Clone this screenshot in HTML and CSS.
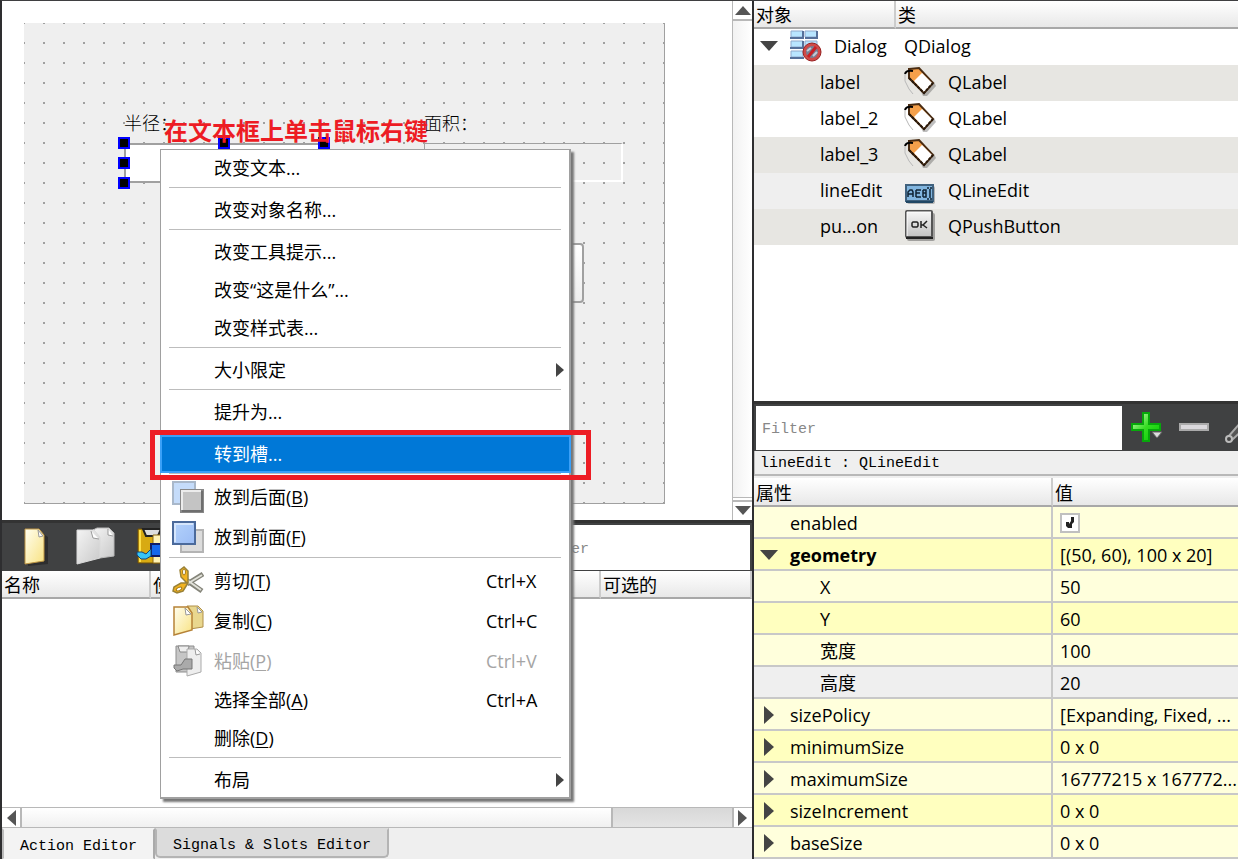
FILE: index.html
```html
<!DOCTYPE html>
<html lang="zh-CN">
<head>
<meta charset="utf-8">
<title>Qt Designer</title>
<link rel="stylesheet" href="styles.css">
</head>
<body>
<svg class="defs" aria-hidden="true">
  <defs>
    <linearGradient id="paper" x1="0" y1="0" x2="1" y2="1"><stop offset="0" stop-color="#fffef0"/><stop offset="1" stop-color="#f8e282"/></linearGradient>
    <linearGradient id="greypaper" x1="0" y1="0" x2="1" y2="1"><stop offset="0" stop-color="#f4f4f4"/><stop offset="1" stop-color="#c9c9c9"/></linearGradient>
    <linearGradient id="blue" x1="0" y1="0" x2="1" y2="1"><stop offset="0" stop-color="#b4d2fb"/><stop offset="1" stop-color="#9bbcf5"/></linearGradient>
    <linearGradient id="green" x1="0" y1="0" x2="1" y2="1"><stop offset="0" stop-color="#d6ffc4"/><stop offset=".5" stop-color="#35dc22"/><stop offset="1" stop-color="#00c900"/></linearGradient>
    <linearGradient id="silver" x1="0" y1="0" x2="0" y2="1"><stop offset="0" stop-color="#f7f7f7"/><stop offset="1" stop-color="#c2c2c2"/></linearGradient>
    <symbol id="tag" viewBox="0 0 32 32">
      <path d="M9 8 19 30 23 30 32 20 30 16z" fill="#000" opacity=".25"/>
      <path d="M5 3 15 2 29 17 20 27 5 12z" fill="#f5a04a" stroke="#4a2c12" stroke-width="2"/>
      <path d="m10 15 8-8 10 10-8 9z" fill="#fff"/>
      <path d="m5 12 15 15 9-10" fill="none" stroke="#27180b" stroke-width="2" stroke-dasharray="3 1"/>
      <path d="M9 5Q2 4 1 8" fill="none" stroke="#000" stroke-width="2"/><path d="M1 8v7l4 8 4 5" fill="none" stroke="#b8b8b8"/>
    </symbol>
  </defs>
</svg>
<div class="app">
  <main class="left">
    <section class="workspace">
      <div class="canvas">
        <div class="form">
          <label class="form-label radius" for="radius">半径：</label>
          <span class="form-label area">面积：</span>
          <input class="form-edit" id="radius" type="text">
          <output class="form-output" aria-label="面积"></output>
          <button class="form-button" type="button" aria-label="计算"></button>
          <i class="handle" style="left:94px;top:114px"></i>
          <i class="handle" style="left:194px;top:114px"></i>
          <i class="handle" style="left:294px;top:114px"></i>
          <i class="handle" style="left:94px;top:134px"></i>
          <i class="handle" style="left:94px;top:154px"></i>
          <strong class="note">在文本框上单击鼠标右键</strong>
        </div>
      </div>
      <div class="vscroll">
        <button type="button" aria-label="向上"><svg width="16" height="10"><path d="m0 10 8-9 8 9z"/></svg></button>
        <span class="vtrack"></span>
        <button class="down" type="button" aria-label="向下"><svg width="16" height="10"><path d="m0 0 8 9 8-9z"/></svg></button>
      </div>
    </section>
    <section class="actions">
      <div class="toolbar">
        <button type="button" aria-label="新建"><svg width="26" height="40"><path d="M4 5h13l6 4v27L3 38z" fill="#191a1a" opacity=".5" transform="translate(2 1)"/><path d="M2 2h14l5 6v26L2 37z" fill="url(#paper)" stroke="#bd9443"/><path d="m15 3 1 7 4-1z" fill="#fff" stroke="#999"/></svg></button>
        <button class="copy" type="button" aria-label="复制"><svg width="40" height="40"><path d="M17 3 21 1h12l5 5v23l-14 2z" fill="url(#greypaper)" stroke="#b9b9b9"/><path d="M1 3h17l6 7v21L1 37z" fill="url(#greypaper)" stroke="#dadada"/><path d="m15 4 2 7 6 1m9-10 0 6 5 1" fill="#fff" stroke="#999"/></svg></button>
        <button class="paste" type="button" aria-label="粘贴"><svg width="36" height="40"><path d="M2 2h24v34H2z" fill="#d8aa12" stroke="#6d4e08"/><path d="M4 3v32" stroke="#ffe04a" stroke-width="2"/><path d="M7 2h18l-3 7H10z" fill="#ddd" stroke="#222" stroke-width="2"/><path d="M17 8h16v28H17z" fill="#fff3b6" stroke="#8c6814"/><path d="M15 17h14v12H15z" fill="#1668ee" stroke="#111c66" stroke-width="2"/><path d="M1 25h5l4 2 5-5v7l-5 3H5l-4-4z" fill="#37c5f6" stroke="#12457c"/></svg></button>
        <input class="action-filter" type="text" aria-label="Filter actions" placeholder="Filter">
      </div>
      <table class="action-table">
        <thead><tr><th class="c-name">名称</th><th>使用的</th><th class="c-check">可选的</th></tr></thead>
      </table>
      <div class="action-body"></div>
      <div class="hscroll">
        <button type="button" aria-label="向左"><svg width="10" height="16"><path d="M10 0 1 8l9 8z"/></svg></button>
        <span class="thumb"></span><span class="trough"></span>
        <button type="button" aria-label="向右"><svg width="10" height="16"><path d="m0 0 9 8-9 8z"/></svg></button>
      </div>
      <nav class="tabs">
        <button class="tab active" type="button">Action Editor</button>
        <button class="tab" type="button">Signals &amp; Slots Editor</button>
      </nav>
    </section>
  </main>
  <aside class="right">
    <section class="inspector">
      <table class="objects">
        <thead><tr><th class="o-name">对象</th><th>类</th></tr></thead>
        <tbody>
          <tr class="root"><td><span class="cell"><svg class="open" width="18" height="10"><path d="M0 0h18L9 10z"/></svg><svg width="32" height="32"><g fill="#b8e5ff" stroke="#8fa9cc"><path d="M1 1h12v6H1zm14 0h12v6H15zM1 11h12v6H1zm14 0h12v6H15zM1 21h12v6H1z"/></g><path d="M0 8h14m1 0h13M0 18h14m1 0h13M0 28h14M13 1v7m14-7v7M13 11v6" stroke="#56709a" stroke-width="2"/><circle cx="22" cy="22" r="9" fill="#cf4a48" stroke="#982020"/><circle cx="22" cy="22" r="6" fill="#777f94"/><path d="m17 21 4-3m2 8 4-4" stroke="#c4cad5" stroke-width="2"/><path d="M18 27 26 17" stroke="#c91f24" stroke-width="3"/></svg>Dialog</span></td><td><span class="cell">QDialog</span></td></tr>
          <tr class="alt"><td class="child">label</td><td><span class="cell"><svg width="32" height="32"><use href="#tag"/></svg>QLabel</span></td></tr>
          <tr><td class="child">label_2</td><td><span class="cell"><svg width="32" height="32"><use href="#tag"/></svg>QLabel</span></td></tr>
          <tr class="alt"><td class="child">label_3</td><td><span class="cell"><svg width="32" height="32"><use href="#tag"/></svg>QLabel</span></td></tr>
          <tr class="selected"><td class="child">lineEdit</td><td><span class="cell"><svg width="32" height="32"><rect x="3" y="12" width="28" height="18" rx="2" fill="#000" opacity=".25"/><rect x="2" y="11" width="27" height="16" fill="#81b5df" stroke="#40617e" stroke-width="2"/><path d="M2 28h27" stroke="#214765" stroke-width="2"/><path d="M4 23v-5l2-2h2l1 2v5M4 20h5M12 16v7m0-7h5m-5 3h4m-4 4h5m2-7v7m0-7h3v3h-3m3 0v4h-3M23 14h2m1 0h2m-2 1v9m-3 1h2m1 0h2" fill="none" stroke="#102436" stroke-width="1.5"/></svg>QLineEdit</span></td></tr>
          <tr class="alt"><td class="child">pu...on</td><td><span class="cell"><svg width="32" height="32"><rect x="3" y="3" width="28" height="28" rx="2" fill="#000" opacity=".3"/><rect x="2" y="1" width="26" height="26" rx="1" fill="url(#silver)" stroke="#555" stroke-width="2"/><path d="M3 26V2h24" fill="none" stroke="#fff"/><path d="M2 28h27" stroke="#222" stroke-width="2"/><path d="M9 12h4l1 1v3l-1 1H9l-1-1v-3zm8-1v7m0-3h2l4-4m-4 4 4 3" fill="none" stroke="#222" stroke-width="1.5"/></svg>QPushButton</span></td></tr>
        </tbody>
      </table>
    </section>
    <section class="properties">
      <div class="prop-tools">
        <input class="prop-filter" type="text" aria-label="Filter properties" placeholder="Filter">
        <button class="add" type="button" aria-label="添加"><svg width="32" height="32"><path d="M12 1h6v11h11v6H18v11h-6V18H1v-6h11z" fill="url(#green)" stroke="#07a80b" stroke-width="2"/><path d="M21 20h10l-5 6z" fill="#ddd" stroke="#666"/></svg></button>
        <button class="remove" type="button" aria-label="删除"><svg width="32" height="32"><path d="M2 12h28v6H2z" fill="#dad8dc" stroke="#aaa" stroke-width="2"/></svg></button>
        <button class="config" type="button" aria-label="配置"><svg width="32" height="32"><path d="m4 25 13-15 7-7 5 5-7 7L8 28z" fill="#555" stroke="#aaa" stroke-width="2"/><circle cx="5" cy="27" r="3" fill="#444" stroke="#bbb" stroke-width="2"/></svg></button>
      </div>
      <p class="current">lineEdit : QLineEdit</p>
      <table class="props">
        <thead><tr><th class="p-name">属性</th><th>值</th></tr></thead>
        <tbody>
          <tr><td class="leaf"><label for="enabled">enabled</label></td><td><span class="check"><input id="enabled" type="checkbox" checked><svg width="8" height="12" aria-hidden="true"><path d="M5 0h3v5L6 7v4H2L0 9V5h3v2l2-3z"/></svg></span></td></tr>
          <tr class="deep"><td><span class="prop"><svg class="open" width="18" height="10"><path d="M0 0h18L9 10z"/></svg><b>geometry</b></span></td><td>[(50, 60), 100 x 20]</td></tr>
          <tr><td class="sub">X</td><td>50</td></tr>
          <tr class="deep"><td class="sub">Y</td><td>60</td></tr>
          <tr><td class="sub">宽度</td><td>100</td></tr>
          <tr class="current-row"><td class="sub">高度</td><td>20</td></tr>
          <tr><td><span class="prop"><svg width="18" height="18"><path d="m4 0 10 9-10 9z"/></svg>sizePolicy</span></td><td>[Expanding, Fixed, ...</td></tr>
          <tr class="deep"><td><span class="prop"><svg width="18" height="18"><path d="m4 0 10 9-10 9z"/></svg>minimumSize</span></td><td>0 x 0</td></tr>
          <tr><td><span class="prop"><svg width="18" height="18"><path d="m4 0 10 9-10 9z"/></svg>maximumSize</span></td><td>16777215 x 167772...</td></tr>
          <tr class="deep"><td><span class="prop"><svg width="18" height="18"><path d="m4 0 10 9-10 9z"/></svg>sizeIncrement</span></td><td>0 x 0</td></tr>
          <tr><td><span class="prop"><svg width="18" height="18"><path d="m4 0 10 9-10 9z"/></svg>baseSize</span></td><td>0 x 0</td></tr>
        </tbody>
      </table>
    </section>
  </aside>
  <div class="menu" role="menu">
    <button type="button" role="menuitem"><span>改变文本...</span></button>
    <hr>
    <button type="button" role="menuitem"><span>改变对象名称...</span></button>
    <hr>
    <button type="button" role="menuitem"><span>改变工具提示...</span></button>
    <button type="button" role="menuitem"><span>改变“这是什么”...</span></button>
    <button type="button" role="menuitem"><span>改变样式表...</span></button>
    <hr>
    <button type="button" role="menuitem"><span>大小限定</span><svg class="more" width="8" height="14"><path d="m0 0 8 7-8 7z"/></svg></button>
    <hr>
    <button type="button" role="menuitem"><span>提升为...</span></button>
    <hr class="blank">
    <button class="hot" type="button" role="menuitem"><span>转到槽...</span></button>
    <hr>
    <button class="pic" type="button" role="menuitem"><svg class="icon" width="32" height="32"><path d="M1 1h22v22H1z" fill="#c5dcfa" stroke="#a9b8ca" stroke-width="2"/><path d="M9 9h22v22H9z" fill="#c4c4c4" stroke="#888" stroke-width="2"/><path d="M10 29V10h19" fill="none" stroke="#ececec" stroke-width="2"/><path d="M10 30h20V10" fill="none" stroke="#6e6e6e" stroke-width="2"/></svg><span>放到后面(<u>B</u>)</span></button>
    <button class="pic" type="button" role="menuitem"><svg class="icon" width="32" height="32"><path d="M9 9h22v22H9z" fill="#dcdcdc" stroke="#b4b4b4" stroke-width="2"/><path d="M1 1h22v22H1z" fill="url(#blue)" stroke="#4b6a9b" stroke-width="2"/><path d="M3 21V3h18" fill="none" stroke="#d6e6fc" stroke-width="2"/></svg><span>放到前面(<u>F</u>)</span></button>
    <hr>
    <button class="pic" type="button" role="menuitem"><svg class="icon" width="32" height="32"><path d="m14 15 16 11M15 19 31 9" stroke="#85857a" stroke-width="5"/><path d="m15 15 14 10M15 19 30 10" stroke="#e2e2da" stroke-width="2"/><path d="m16 15 0-9-4-4-4 3 1 7 6 6-6 0-7 4-1 4 4 2 6-2 5-8z" fill="#f2b321" stroke="#9a8238" stroke-width="1.5"/><ellipse cx="12" cy="7" rx="1.5" ry="3" fill="#fff" stroke="#a47b17"/><ellipse cx="7" cy="24" rx="3" ry="1.5" fill="#fff" stroke="#a47b17" transform="rotate(-25 7 24)"/></svg><span>剪切(<u>T</u>)</span><kbd>Ctrl+X</kbd></button>
    <button class="pic" type="button" role="menuitem"><svg class="icon" width="32" height="32"><path d="M15 1h11l5 5v16l-13 2z" fill="#e9d78e" stroke="#b08f48"/><path d="M2 2h14l4 6v17L2 30z" fill="url(#paper)" stroke="#b68237" stroke-width="1.5"/><path d="m13 3 1 7 5-1zM25 2l1 6 4-1z" fill="#fff" stroke="#999"/></svg><span>复制(<u>C</u>)</span><kbd>Ctrl+C</kbd></button>
    <button class="pic disabled" type="button" role="menuitem" disabled><svg class="icon" width="32" height="32"><path d="M4 1h18v26H4z" fill="#c6c6c6" stroke="#8d8d8d"/><path d="M6 1h11l-1 6H8z" fill="#eee" stroke="#888"/><path d="M15 4h10l4 4v19l-14 4z" fill="#eee" stroke="#aaa"/><path d="M2 20h7l4-6h7v10h-9L5 26l-3-3z" fill="#aaa" stroke="#777"/><path d="m23 4 1 6 4-1" fill="#fff" stroke="#999"/></svg><span>粘贴(<u>P</u>)</span><kbd>Ctrl+V</kbd></button>
    <button type="button" role="menuitem"><span>选择全部(<u>A</u>)</span><kbd>Ctrl+A</kbd></button>
    <button type="button" role="menuitem"><span>删除(<u>D</u>)</span></button>
    <hr>
    <button type="button" role="menuitem"><span>布局</span><svg class="more" width="8" height="14"><path d="m0 0 8 7-8 7z"/></svg></button>
  </div>
  <div class="callout"></div>
</div>
</body>
</html>
```
FILE: styles.css
```css
* { box-sizing: border-box; }
body { margin: 0; background: #fff; color: #000; font: 18px/24px "Open Sans", "Noto Sans CJK SC", sans-serif; }
button, input { font: inherit; color: inherit; border: 0; padding: 0; background: none; border-radius: 0; }
svg { display: block; flex: none; }
.defs { position: absolute; width: 0; height: 0; }
.app { position: relative; display: flex; height: 100vh; overflow: hidden; border-top: 1px solid #3f3f41; border-left: 2px solid #2e2e30; }
.left { flex: 750; min-width: 0; display: flex; flex-direction: column; border-right: 2px solid #2e2e30; }
.right { flex: 484; min-width: 0; display: flex; flex-direction: column; }

.workspace { flex: 519; min-height: 0; display: flex; overflow: hidden; }
.canvas { flex: 1; padding: 22px; }
.form { position: relative; width: 641px; height: 481px; background: conic-gradient(from 270deg at 2px 2px, #a0a0a0 90deg, transparent 0) -1px -1px / 20px 20px, #efefef; border-right: 1px solid #a0a0a0; border-bottom: 1px solid #a0a0a0; }
.form-label { position: absolute; top: 87px; font-family: "Noto Sans CJK SC", sans-serif; font-weight: 300; }
.radius { left: 100px; }
.area { left: 400px; }
.form-edit { position: absolute; left: 100px; top: 120px; width: 200px; height: 40px; background: #fff; border: 2px solid #a0a0a0; }
.form-output { position: absolute; left: 400px; top: 120px; width: 199px; height: 39px; border: solid #a0a0a0; border-width: 1px 2px 2px 1px; border-right-color: #fff; border-bottom-color: #fff; }
.form-button { position: absolute; left: 400px; top: 220px; width: 160px; height: 60px; background: linear-gradient(#fff, #eee); border: 2px solid #a0a0a0; border-radius: 4px; }
.handle { position: absolute; width: 12px; height: 12px; background: #000; border: 2px solid #00f; }
.note { position: absolute; left: 140px; top: 91px; font: bold 24px/32px "Noto Sans CJK SC", sans-serif; color: #ed1c24; white-space: nowrap; }

.vscroll { width: 20px; display: flex; flex-direction: column; border-left: 1px solid #b8b8b8; }
.vscroll button { height: 20px; padding-left: 2px; border-bottom: 2px solid #b8b8b8; }
.vscroll .down { border-bottom: 0; border-top: 2px solid #b8b8b8; }
.vtrack { flex: 1; background: linear-gradient(90deg, #f2f2f2, #fff); border-bottom: 1px solid #b8b8b8; margin-bottom: 2px; }
.vscroll svg, .hscroll svg { fill: #555; }

.actions { flex: 339; min-height: 0; display: flex; flex-direction: column; }
.toolbar { height: 51px; display: flex; align-items: center; background: #404142; border-top: 3px solid #333; padding: 2px 2px 2px 21px; }
.toolbar .copy { margin-left: 27px; }
.toolbar .paste { margin-left: 20px; }
.action-filter { flex: 1; min-width: 0; height: 45px; background: #fff; margin-left: 357px; padding: 4px 0 0 6px; font: 15px "Liberation Mono", monospace; }
input::placeholder { color: #888; opacity: 1; }
table { border-collapse: separate; border-spacing: 0; table-layout: fixed; width: 100%; }
th, td { padding: 0; text-align: left; font-weight: normal; white-space: nowrap; overflow: hidden; }
th { height: 28px; padding: 2px 0 0 2px; background: linear-gradient(#fff, #e8e8e8); border-bottom: 2px solid #a8a8a8; border-right: 2px solid #ccc; }
.right th:last-child { border-right: 0; }
.action-table .c-name { width: 149px; }
.action-table .c-check { width: 151px; }
.action-body { flex: 1; background: #fff; }
.hscroll { height: 21px; display: flex; border: solid #b8b8b8; border-width: 1px 0; }
.hscroll button { width: 18px; display: grid; place-items: center; }
.thumb { flex: 592; background: linear-gradient(#fff, #f0f0f0); border: solid #b8b8b8; border-width: 0 2px 0 2px; }
.trough { flex: 120; background: linear-gradient(#d8d8d8, #e4e4e4); border-right: 2px solid #b8b8b8; }
.tabs { height: 31px; display: flex; align-items: flex-start; background: #efefef; }
.tab { height: 30px; padding: 4px 16px 0; font: 15px/24px "Liberation Mono", monospace; background: #dcdcdc; border: 2px solid #b4b4b4; border-top-color: #dcdcdc; border-radius: 0 0 5px 5px; }
.tab.active { height: 32px; padding: 5px 16px 0; background: #f3f3f3; border-color: #f3f3f3 #aaa #f3f3f3 #bbb; border-radius: 0; }

.inspector { flex: 400; min-height: 0; overflow: hidden; background: #fff; }
.o-name { width: 142px; }
.objects td { height: 36px; padding-bottom: 2px; }
.objects .cell { display: flex; align-items: center; gap: 12px; padding-left: 8px; }
.objects td:first-child .cell { padding-left: 6px; }
.open, .prop svg { fill: #444; }
.objects .child { padding-left: 66px; }
.objects .alt { background: #e7e6e2; }
.objects .selected { background: #efefef; }
.properties { flex: 458; min-height: 0; overflow: hidden; background: #efefef; }
.prop-tools { height: 50px; display: flex; align-items: center; background: #404142; border-top: 3px solid #333; padding-left: 2px; overflow: hidden; }
.prop-filter { flex: 1; min-width: 0; height: 44px; padding: 4px 0 0 6px; background: #fff; font: 15px "Liberation Mono", monospace; }
.add { margin-left: 9px; }
.remove { margin-left: 15px; }
.config { width: 14px; margin-left: 14px; overflow: hidden; }
.current { margin: 0 0 2px; height: 25px; padding: 3px 0 0 5px; font: 15px/20px "Liberation Mono", monospace; border-left: 1px solid #bbb; border-bottom: 2px solid #b8b8b8; }
.p-name { width: 299px; }
.props th { padding-top: 3px; }
.props td { height: 32px; background: #ffffdc; border-bottom: 2px solid #c8c8c8; padding: 2px 0 0 7px; }
.props td:first-child { border-right: 2px solid #c8c8c8; }
.props .deep td { background: #ffffbf; }
.props .current-row td { background: #efefef; }
.props .leaf { padding-left: 36px; }
.props .sub { padding-left: 66px; }
.prop { display: flex; align-items: center; gap: 12px; }
.props td:has(.prop) { padding-left: 6px; }
.check { display: grid; width: 20px; height: 20px; place-items: center; }
.check > * { grid-area: 1 / 1; }
.check svg { z-index: 1; fill: #222; pointer-events: none; visibility: hidden; }
.check input:checked + svg { visibility: visible; }
.props input { display: block; appearance: none; width: 20px; height: 20px; margin: 0; background: #fff; border: 2px solid #c0c0c0; }

.menu { position: absolute; left: 158px; top: 148px; width: 411px; background: #fff; box-shadow: inset 1px 1px #a0a0a0, inset -2px -2px #a0a0a0, 3px 3px 2px #777; }
.menu button { display: flex; align-items: center; width: 100%; height: 38px; padding: 0 29px 0 54px; text-align: left; }
.menu .pic { height: 40px; padding-left: 12px; gap: 10px; }
.menu hr { height: 4px; margin: 0 10px 0 9px; border: 0; border-top: 1px solid #bdbdbd; }
.menu .blank { border-color: transparent; }
.menu .hot { background: #0078d7; color: #fff; border: 2px solid #3aa0f8; padding-left: 52px; }
.menu .disabled { color: #a5a5a5; }
.menu kbd { width: 56px; margin-left: auto; font: inherit; }
.menu .more { margin-left: auto; margin-right: -22px; fill: #444; }
.menu u { text-underline-offset: 2px; text-decoration-thickness: 1px; }
.callout { position: absolute; left: 148px; top: 429px; width: 441px; height: 50px; border: 5px solid #ed1c24; pointer-events: none; }
```
